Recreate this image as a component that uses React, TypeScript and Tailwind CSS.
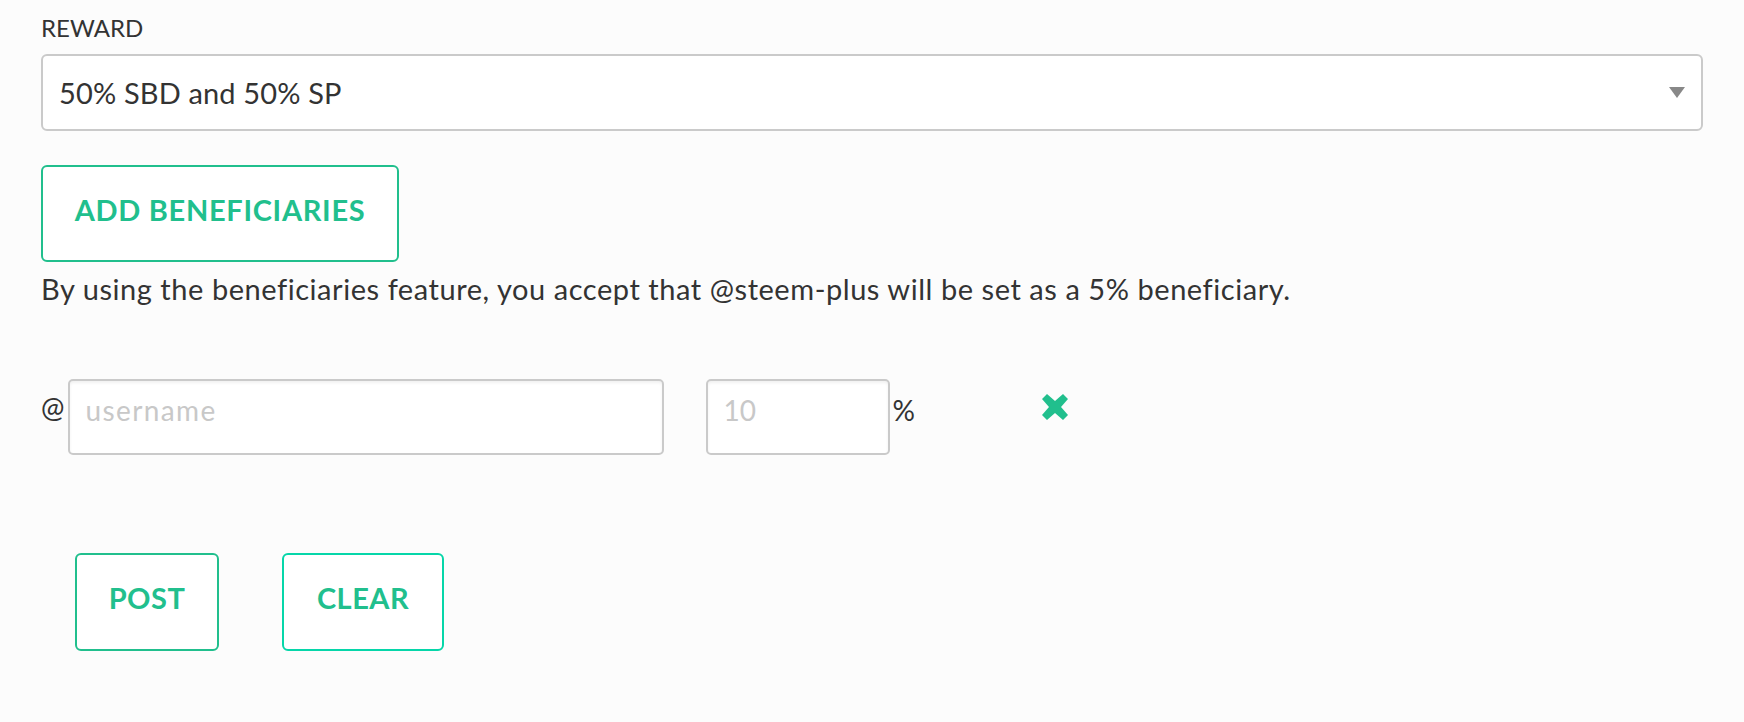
import React from "react";

export default function App() {
  return (
    <div
      className="min-h-screen w-full bg-[#fcfcfc] px-[41px] pt-[13px] text-[#333]"
      style={{ fontFamily: "Lato, 'Noto Sans', sans-serif" }}
    >
      <label className="block text-[24px] leading-[30px]">REWARD</label>

      <div className="relative mt-[11px] flex h-[77px] w-[1662px] items-center rounded-[6px] border-2 border-[#cacaca] bg-white pl-[16px] pr-[16px]">
        <span className="text-[29px] leading-[36px] tracking-[0.15px]">50% SBD and 50% SP</span>
        <svg
          className="ml-auto mr-[0px]"
          width="16"
          height="11"
          viewBox="0 0 16 11"
        >
          <polygon points="0,0 16,0 8,11" fill="#888888" />
        </svg>
      </div>

      <button className="mt-[34px] flex h-[97px] w-[358px] items-center justify-center rounded-[6px] border-2 border-[#21bf8d] bg-white pb-[8px] text-[29px] font-bold leading-[36px] tracking-[0.7px] text-[#21bf8d]">
        ADD BENEFICIARIES
      </button>

      <p className="mt-[9px] text-[29px] leading-[35px] tracking-[0.55px]">
        By using the beneficiaries feature, you accept that @steem-plus will be set as a 5% beneficiary.
      </p>

      <div className="mt-[73px] flex items-start">
        <span className="mt-[11px] text-[28px] leading-[34px]">@</span>
        <input
          className="ml-[4px] h-[76px] w-[596px] rounded-[5px] border-2 border-[#cacaca] bg-white pb-[15px] pl-[15px] text-[28px] leading-[34px] tracking-[1.4px] shadow-[inset_0_2px_3px_rgba(0,0,0,0.06)] outline-none placeholder:text-[#c8c8c8]"
          placeholder="username"
        />
        <input
          className="ml-[42px] h-[76px] w-[184px] rounded-[5px] border-2 border-[#cacaca] bg-white pb-[15px] pl-[15px] text-[28px] leading-[34px] shadow-[inset_0_2px_3px_rgba(0,0,0,0.06)] outline-none placeholder:text-[#c8c8c8]"
          placeholder="10"
        />
        <span className="ml-[2px] mt-[14px] text-[28px] leading-[34px]">%</span>
        <svg
          className="ml-[127px] mt-[15px]"
          width="26"
          height="26"
          viewBox="0 0 26 26"
        >
          <polygon
            points="5,0 13,7 21,0 26,5 19,13 26,21 21,26 13,19 5,26 0,21 7,13 0,5"
            fill="#21bf8d"
          />
        </svg>
      </div>

      <div className="ml-[34px] mt-[98px] flex gap-[63px]">
        <button className="flex h-[98px] w-[144px] items-center justify-center rounded-[6px] border-2 border-[#21bf8d] bg-white pb-[8px] text-[29px] font-bold leading-[36px] tracking-[0.5px] text-[#21bf8d]">
          POST
        </button>
        <button className="flex h-[98px] w-[162px] items-center justify-center rounded-[6px] border-2 border-[#06d6a9] bg-white pb-[8px] text-[29px] font-bold leading-[36px] tracking-[0.5px] text-[#21bf8d]">
          CLEAR
        </button>
      </div>
    </div>
  );
}
